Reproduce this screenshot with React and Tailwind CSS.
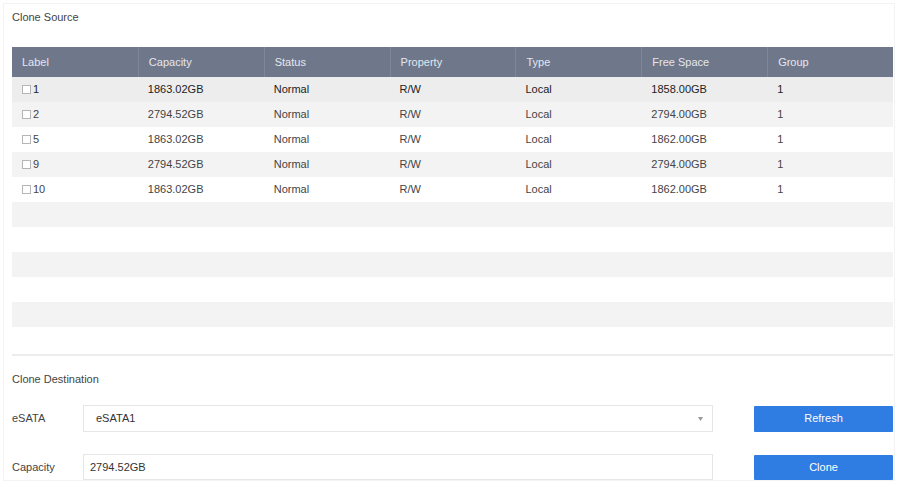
import React from "react";

const cols = ["Label", "Capacity", "Status", "Property", "Type", "Free Space", "Group"];
const rows = [
  ["1", "1863.02GB", "Normal", "R/W", "Local", "1858.00GB", "1"],
  ["2", "2794.52GB", "Normal", "R/W", "Local", "2794.00GB", "1"],
  ["5", "1863.02GB", "Normal", "R/W", "Local", "1862.00GB", "1"],
  ["9", "2794.52GB", "Normal", "R/W", "Local", "2794.00GB", "1"],
  ["10", "1863.02GB", "Normal", "R/W", "Local", "1862.00GB", "1"],
];

function Row({ data, idx }) {
  const bg = idx === 0 ? "bg-[#ededed]" : idx % 2 === 1 ? "bg-[#f3f3f3]" : "bg-white";
  return (
    <div className={`grid grid-cols-7 h-[25px] items-center ${bg}`}>
      {data
        ? data.map((c, i) => (
            <div key={i} className="pl-[10px] flex items-center">
              {i === 0 && (
                <span className="w-[9px] h-[9px] border border-[#b5b5b5] bg-white mr-[2px] inline-block" />
              )}
              <span className={idx === 0 ? "text-[#222]" : "text-[#444]"}>{c}</span>
            </div>
          ))
        : null}
    </div>
  );
}

export default function App() {
  const all = [...rows, ...Array(6).fill(null)];
  return (
    <div
      className="w-[898px] h-[484px] bg-white text-[11px] leading-[13px] text-[#333] overflow-hidden p-[3px]"
      style={{ fontFamily: '"Liberation Sans", Arial, sans-serif' }}
    >
      <div className="h-full border border-[#f3f3f3] pl-[8px] pr-[1px]">
        <div className="pt-[7px] text-[#444]">Clone Source</div>
        <div className="mt-[23px]">
          <div className="grid grid-cols-7 h-[30px] bg-[#6f778a] text-[#e4e7ee]">
            {cols.map((c, i) => (
              <div
                key={c}
                className={`flex items-center pl-[10px] ${i > 0 ? "border-l border-[#7f8698]" : ""}`}
              >
                {c}
              </div>
            ))}
          </div>
          {all.map((r, i) => (
            <Row key={i} data={r} idx={i} />
          ))}
          <div className="mt-[2px] h-[2px] bg-[#ececec]" />
        </div>
        <div className="mt-[17px] text-[#444]">Clone Destination</div>
        <div className="mt-[19px] flex items-center">
          <div className="w-[71px] shrink-0 text-[#444]">eSATA</div>
          <div className="w-[630px] shrink-0 h-[27px] border border-[#e6e6e6] flex items-center justify-between pl-[12px] pr-[9px]">
            <span className="text-[#333]">eSATA1</span>
            <svg width="5" height="4" viewBox="0 0 5 4">
              <path d="M0 0 L5 0 L2.5 4 Z" fill="#999" />
            </svg>
          </div>
          <button className="ml-[41px] shrink-0 w-[139px] h-[26px] bg-[#2f7ce2] text-white text-[11px] rounded-[1px]">
            Refresh
          </button>
        </div>
        <div className="mt-[22px] flex items-center">
          <div className="w-[71px] shrink-0 text-[#444]">Capacity</div>
          <div className="w-[630px] shrink-0 h-[26px] border border-[#e6e6e6] flex items-center pl-[6px]">
            <span className="text-[#333]">2794.52GB</span>
          </div>
          <button className="ml-[41px] shrink-0 w-[139px] h-[25px] bg-[#2f7ce2] text-white text-[11px] rounded-[1px]">
            Clone
          </button>
        </div>
      </div>
    </div>
  );
}
